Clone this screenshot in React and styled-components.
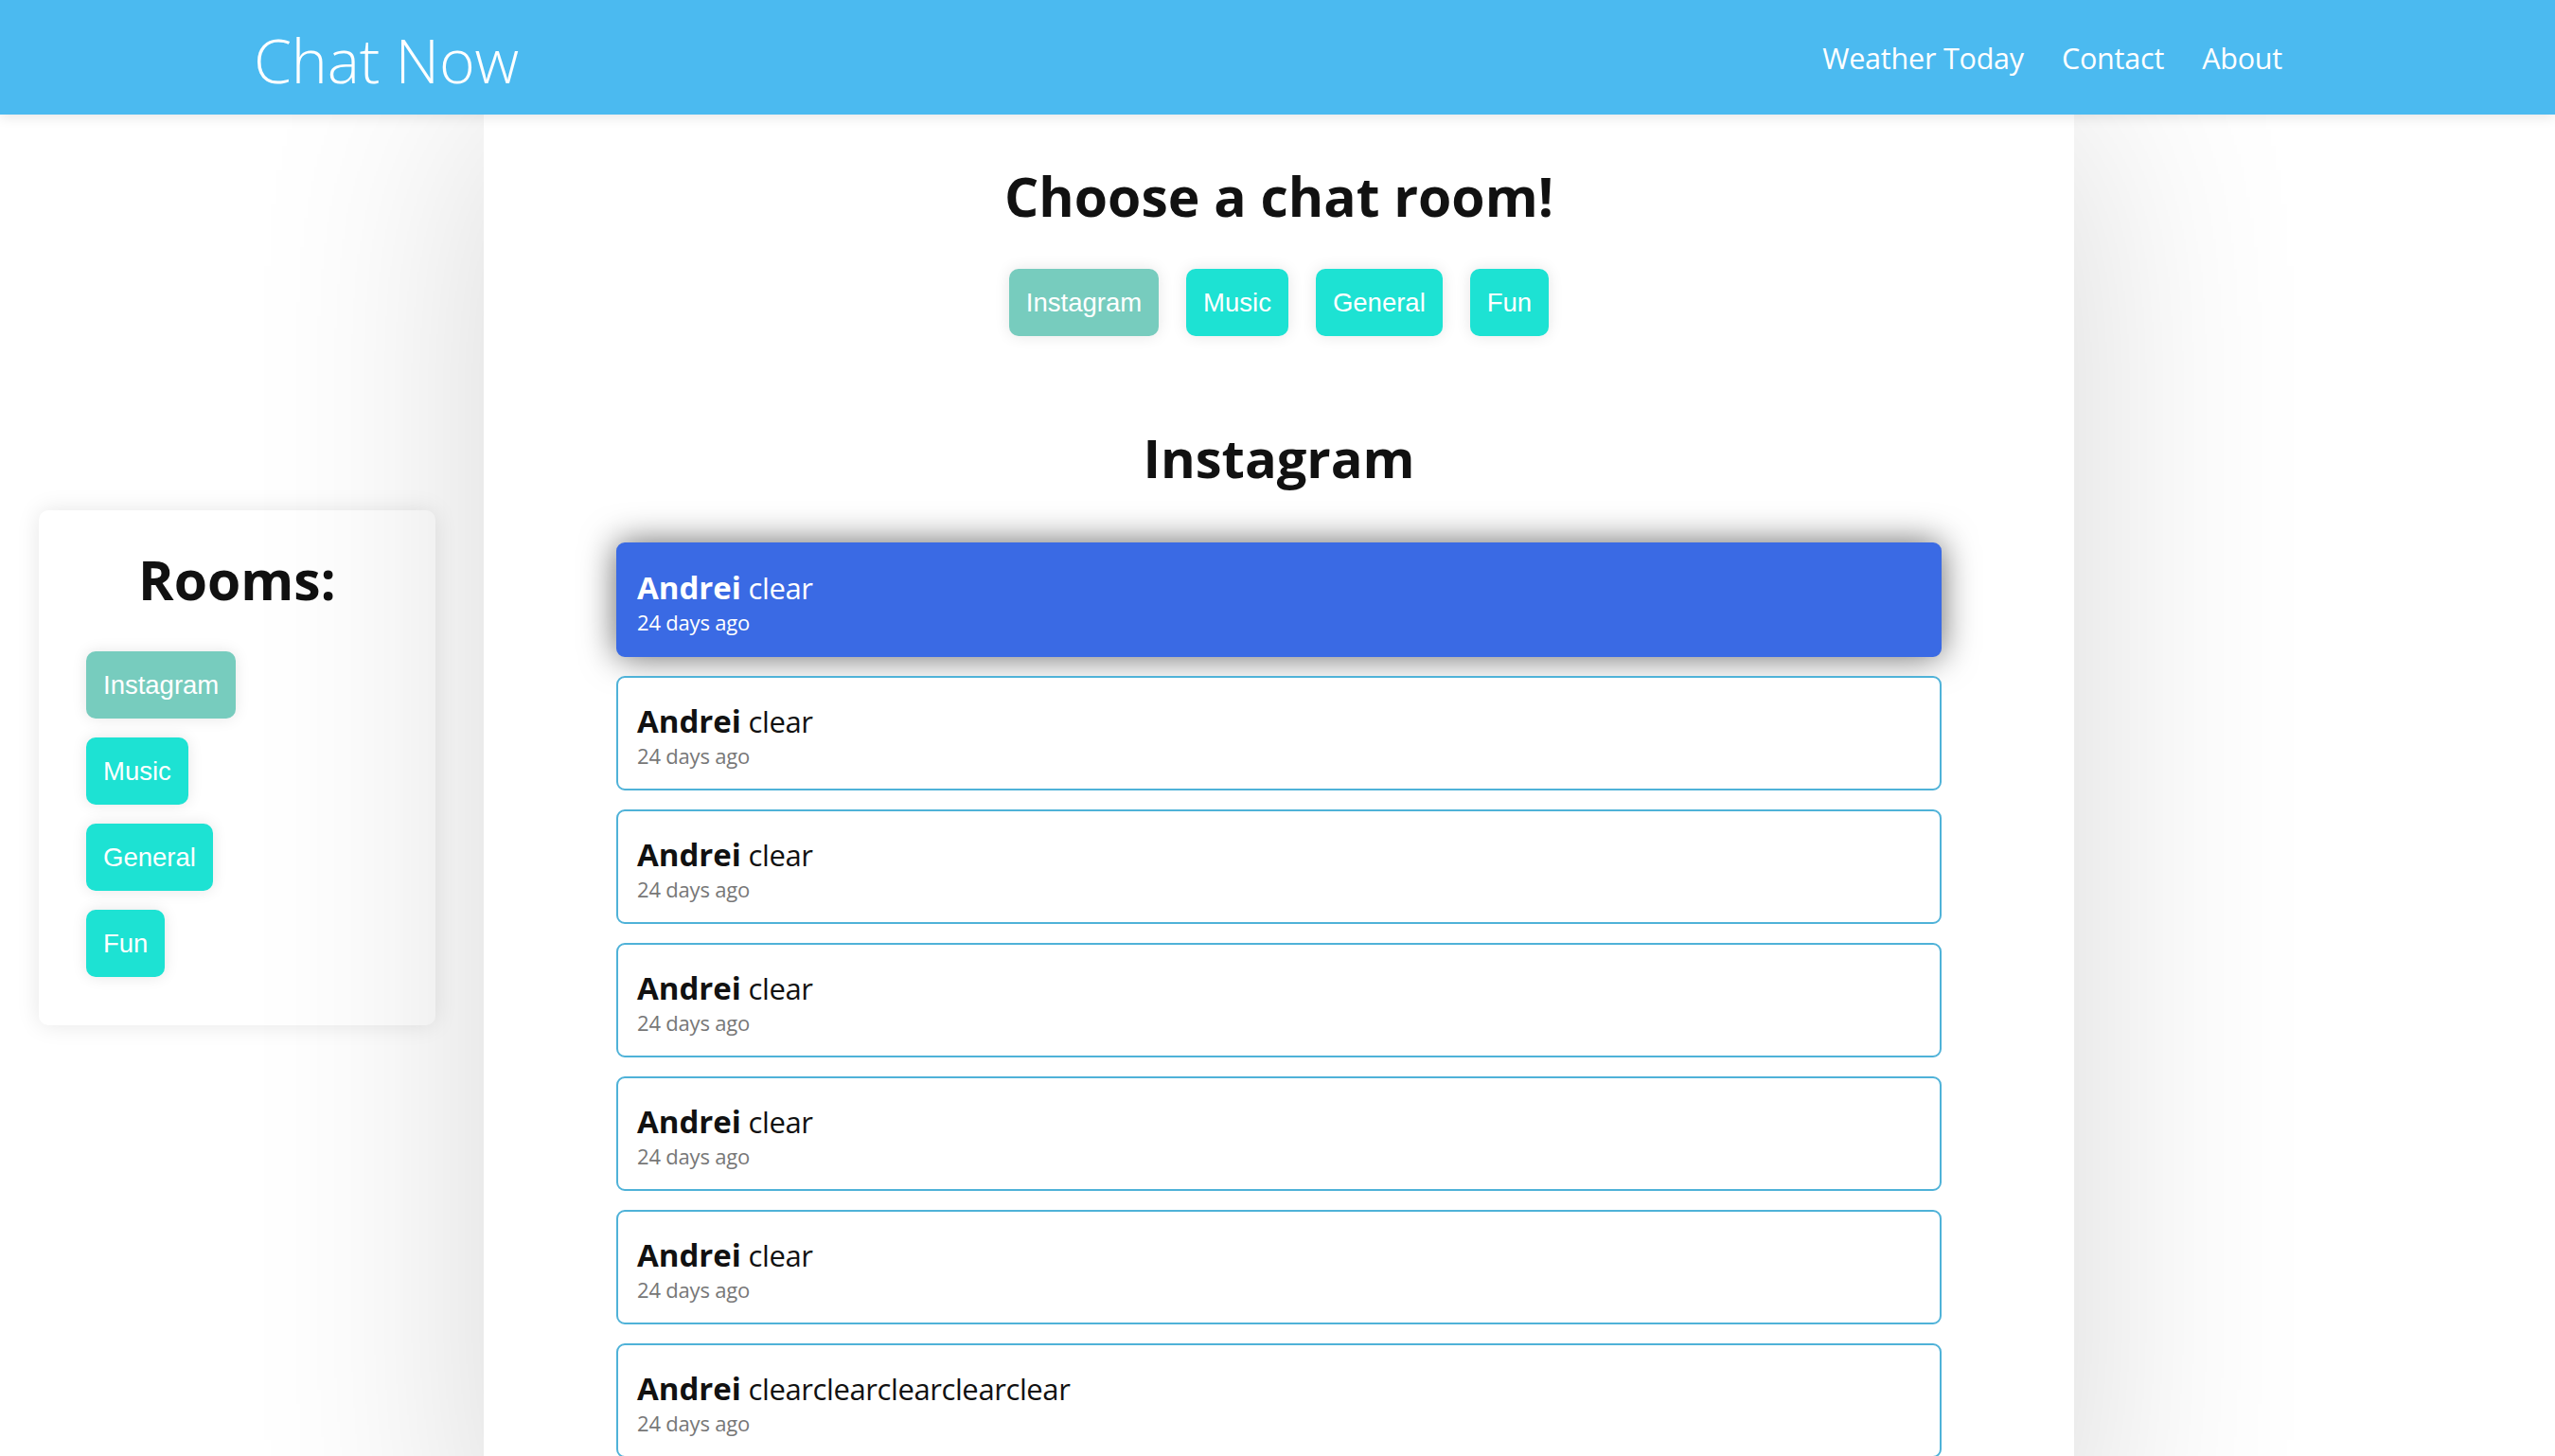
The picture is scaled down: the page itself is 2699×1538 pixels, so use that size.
import React, { useState } from "react";
import styled, { createGlobalStyle } from "styled-components";

const rooms = ["Instagram", "Music", "General", "Fun"];

const messages = [
    { user: "Andrei", text: "clear", time: "24 days ago" },
    { user: "Andrei", text: "clear", time: "24 days ago" },
    { user: "Andrei", text: "clear", time: "24 days ago" },
    { user: "Andrei", text: "clear", time: "24 days ago" },
    { user: "Andrei", text: "clear", time: "24 days ago" },
    { user: "Andrei", text: "clear", time: "24 days ago" },
    { user: "Andrei", text: "clearclearclearclearclear", time: "24 days ago" },
    { user: "Andrei", text: "clear", time: "24 days ago" },
];

const GlobalStyle = createGlobalStyle`
    body {
        margin: 0;
        background: #fff;
        font-family: "Open Sans", "Noto Sans", sans-serif;
        color: #111;
    }
`;

const App = () => {
    const [room, setRoom] = useState("Instagram");
    const [selected, setSelected] = useState(0);

    return (
        <>
            <GlobalStyle />
            <Header>
                <Logo>Chat Now</Logo>
                <Nav>
                    <NavLink>Weather Today</NavLink>
                    <NavLink>Contact</NavLink>
                    <NavLink>About</NavLink>
                </Nav>
            </Header>
            <Layout>
                <Gutter>
                    <RoomsCard>
                        <RoomsTitle>Rooms:</RoomsTitle>
                        <RoomsList>
                            {rooms.map((r) => (
                                <RoomBtn key={r} active={room === r} onClick={() => setRoom(r)}>
                                    {r}
                                </RoomBtn>
                            ))}
                        </RoomsList>
                    </RoomsCard>
                </Gutter>
                <Panel>
                    <Title>Choose a chat room!</Title>
                    <ButtonRow>
                        {rooms.map((r) => (
                            <RoomBtn key={r} active={room === r} onClick={() => setRoom(r)}>
                                {r}
                            </RoomBtn>
                        ))}
                    </ButtonRow>
                    <RoomName>{room}</RoomName>
                    <MessageList>
                        {messages.map((m, idx) => (
                            <Message key={idx} active={selected === idx} onClick={() => setSelected(idx)}>
                                <Line>
                                    <User>{m.user}</User> {m.text}
                                </Line>
                                <Time active={selected === idx}>{m.time}</Time>
                            </Message>
                        ))}
                    </MessageList>
                </Panel>
                <Gutter />
            </Layout>
        </>
    );
};

export default App;

const Header = styled.header`
    position: relative;
    z-index: 2;
    height: 121px;
    background: #4bbaf0;
    box-shadow: 0 3px 12px rgba(0, 0, 0, 0.1);
    display: flex;
    align-items: center;
    justify-content: space-between;
    padding: 0 288px 0 268px;
    color: #fff;
`;
const Logo = styled.div`
    font-size: 64.5px;
    font-weight: 300;
    letter-spacing: -0.2px;
    margin-top: 4px;
`;
const Nav = styled.nav`
    display: flex;
    gap: 40px;
`;
const NavLink = styled.a`
    font-size: 30.5px;
    font-weight: 400;
    letter-spacing: -0.2px;
    color: #fff;
    cursor: pointer;
`;

const Layout = styled.div`
    display: grid;
    grid-template-columns: 511px 1680px 1fr;
    min-height: calc(100vh - 121px);
`;
const Gutter = styled.div`
    display: flex;
    flex-direction: column;
`;
const Panel = styled.main`
    position: relative;
    z-index: 1;
    background: #fff;
    box-shadow: 0 0 230px rgba(0, 0, 0, 0.16);
    padding: 53px 0 0;
    display: flex;
    flex-direction: column;
    align-items: center;
`;
const Title = styled.h1`
    margin: 0;
    font-size: 57px;
    line-height: 67px;
    font-weight: 700;
`;
const RoomName = styled(Title)`
    margin-top: 95px;
    font-size: 56px;
`;
const ButtonRow = styled.div`
    display: flex;
    gap: 29px;
    margin-top: 43px;
`;
const RoomBtn = styled.button`
    height: 71px;
    padding: 0 18px;
    border: 0;
    border-radius: 10px;
    background: ${(p) => (p.active ? "#77ccbe" : "#1de2d3")};
    color: #fff;
    font-family: "Liberation Sans", Arial, sans-serif;
    font-size: 27.5px;
    box-shadow: 0 0 16px rgba(0, 0, 0, 0.1);
    cursor: pointer;
`;

const MessageList = styled.div`
    align-self: stretch;
    margin: 56px 140px 0 140px;
    display: flex;
    flex-direction: column;
    gap: 20px;
`;
const Message = styled.div`
    box-sizing: border-box;
    height: 121px;
    padding: 25px 20px 0;
    border: 2px solid ${(p) => (p.active ? "#3a6ae4" : "#4fb2d8")};
    border-radius: 9px;
    background: ${(p) => (p.active ? "#3a6ae4" : "#fff")};
    color: ${(p) => (p.active ? "#fff" : "#111")};
    box-shadow: ${(p) => (p.active ? "0 0 36px rgba(0,0,0,0.6)" : "none")};
    cursor: pointer;
`;
const Line = styled.div`
    font-size: 31px;
    line-height: 42px;
    letter-spacing: -0.4px;
`;
const User = styled.span`
    font-size: 33px;
    font-weight: 700;
    letter-spacing: 0;
`;
const Time = styled.div`
    font-size: 22px;
    line-height: 30px;
    letter-spacing: -0.2px;
    color: ${(p) => (p.active ? "#fff" : "#777")};
`;

const RoomsCard = styled.aside`
    box-sizing: border-box;
    width: 419px;
    height: 544px;
    margin: 418px 0 0 41px;
    padding: 40px 50px 0;
    background: #fff;
    border-radius: 10px;
    box-shadow: 0 0 24px rgba(0, 0, 0, 0.1);
`;
const RoomsTitle = styled.h2`
    margin: 0;
    text-align: center;
    font-size: 57px;
    line-height: 67px;
    font-weight: 700;
`;
const RoomsList = styled.div`
    display: flex;
    flex-direction: column;
    align-items: flex-start;
    gap: 20px;
    margin-top: 42px;
`;
